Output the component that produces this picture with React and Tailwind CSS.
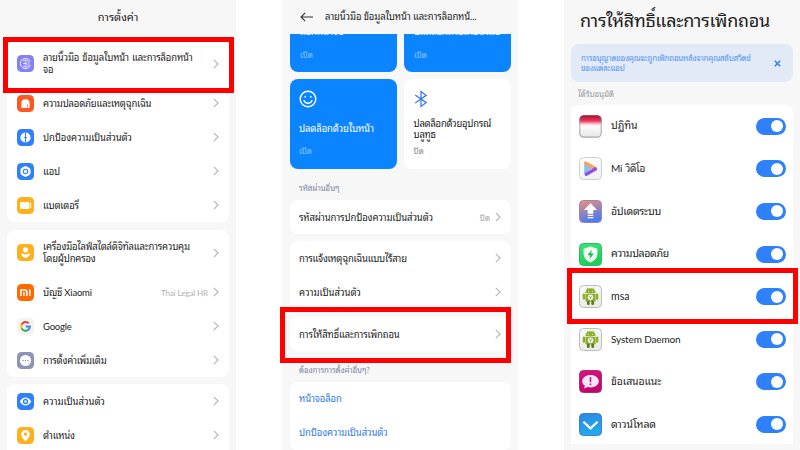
import React from "react";

const Chevron = ({ className = "" }) => (
  <svg viewBox="0 0 6 10" className={`w-[6px] h-[10px] shrink-0 ${className}`} fill="none" stroke="#b4b4b4" strokeWidth="1.1">
    <path d="M0.8 0.9 L5.1 5 L0.8 9.1" />
  </svg>
);

const Tile = ({ color, children }) => (
  <svg viewBox="0 0 17 17" className="w-[17px] h-[17px] shrink-0">
    <rect width="17" height="17" rx="4.6" fill={color} />
    {children}
  </svg>
);

const FingerprintIcon = () => (
  <Tile color="#8580f8">
    <g fill="none" stroke="#fff" strokeWidth="1" strokeLinecap="round" opacity="0.85">
      <path d="M13.2 6.2 A5.2 5.2 0 1 0 13.4 10.4" />
      <path d="M6.2 5.9 A3.4 3.4 0 0 1 11.9 8.5 A3.4 3.4 0 0 1 6.4 11.3" />
      <path d="M6.6 8.5 H8.6 M8.2 6.8 A1.8 1.8 0 0 1 8.2 10.3" />
    </g>
  </Tile>
);

const AlarmIcon = () => (
  <Tile color="#fd5722">
    <path d="M4.4 12.4 V8.4 A4.1 4.1 0 0 1 12.6 8.4 V12.4 A0.6 0.6 0 0 1 12 13 H5 A0.6 0.6 0 0 1 4.4 12.4Z" fill="#fff" />
    <path d="M10.5 9.2 V12.8" stroke="#fd5722" strokeWidth="0.6" />
  </Tile>
);

const PrivacyIcon = () => (
  <Tile color="#2f80fb">
    <circle cx="8.5" cy="8.5" r="5.1" fill="#fff" />
    <path d="M8.5 3.4 V13.6 M7.2 8.5 H10" stroke="#2f80fb" strokeWidth="1" />
  </Tile>
);

const AppsIcon = () => (
  <Tile color="#2f80fb">
    <path d="M7.3 3.4 Q8.5 2.8 9.7 3.4 L12.4 5 Q13.5 5.7 13.5 6.9 V10.1 Q13.5 11.3 12.4 12 L9.7 13.6 Q8.5 14.2 7.3 13.6 L4.6 12 Q3.5 11.3 3.5 10.1 V6.9 Q3.5 5.7 4.6 5Z" fill="#fff" />
    <circle cx="8.5" cy="8.5" r="2.2" fill="none" stroke="#2f80fb" strokeWidth="1.1" />
  </Tile>
);

const BatteryIcon = () => (
  <Tile color="#ffb01f">
    <rect x="3.1" y="5.1" width="9.3" height="6.9" rx="1.3" fill="#fff" />
    <path d="M13.7 6.4 V10.6" stroke="#fff" strokeWidth="0.9" strokeLinecap="round" />
  </Tile>
);

const FamilyIcon = () => (
  <Tile color="#ffb01f">
    <circle cx="8.5" cy="5.8" r="2.6" fill="#fff" />
    <path d="M4.2 10 Q4.6 9 5.8 9.4 Q8.5 11.4 11.2 9.4 Q12.4 9 12.8 10 Q12.4 12.2 10.5 13.2 Q8.5 14.2 6.5 13.2 Q4.6 12.2 4.2 10Z" fill="#fff" />
  </Tile>
);

const MiIcon = () => (
  <Tile color="#ff6a00">
    <path d="M3.9 11.9 V5.9 H7.8 Q9.9 5.9 9.9 7.9 V11.9 M6.9 8 V11.9 M12.8 5.2 V11.9" fill="none" stroke="#fff" strokeWidth="1.5" />
  </Tile>
);

const GoogleIcon = () => (
  <Tile color="#f4f4f4">
    <g fill="none" strokeWidth="2">
      <path d="M11.8 5.4 A4.4 4.4 0 0 0 4.6 6.6" stroke="#ea4335" />
      <path d="M4.6 6.5 A4.4 4.4 0 0 0 4.6 10.5" stroke="#fbbc05" />
      <path d="M4.6 10.4 A4.4 4.4 0 0 0 11.3 11.8" stroke="#34a853" />
      <path d="M11.2 11.9 A4.4 4.4 0 0 0 12.9 8.6 H8.6" stroke="#4285f4" />
    </g>
  </Tile>
);

const MoreIcon = () => (
  <Tile color="#8d95b5">
    <circle cx="8.5" cy="8.5" r="5.6" fill="#fff" />
    <g fill="#8d95b5">
      <circle cx="6" cy="8.5" r="0.75" />
      <circle cx="8.5" cy="8.5" r="0.75" />
      <circle cx="11" cy="8.5" r="0.75" />
    </g>
  </Tile>
);

const EyeIcon = () => (
  <Tile color="#2f80fb">
    <path d="M2.8 8.5 Q5.2 4.4 8.5 4.4 Q11.8 4.4 14.2 8.5 Q11.8 12.6 8.5 12.6 Q5.2 12.6 2.8 8.5Z" fill="#fff" />
    <circle cx="8.5" cy="8.5" r="2.7" fill="#2f80fb" />
    <circle cx="8.5" cy="8.5" r="1.2" fill="#fff" />
  </Tile>
);

const PinIcon = () => (
  <Tile color="#ffb01f">
    <path d="M8.5 14.3 C6.6 12.2 4.2 9.9 4.2 7.2 A4.3 4.3 0 0 1 12.8 7.2 C12.8 9.9 10.4 12.2 8.5 14.3Z" fill="#fff" />
    <circle cx="8.5" cy="7.2" r="1.6" fill="#ffb01f" />
  </Tile>
);

const AppTile = ({ id, from, to, children, border = "#cfcfcf" }) => (
  <svg viewBox="0 0 23 23" className="w-[23px] h-[23px] shrink-0">
    <defs>
      <linearGradient id={id} x1="0" y1="0" x2="0.3" y2="1">
        <stop offset="0" stopColor={from} />
        <stop offset="1" stopColor={to} />
      </linearGradient>
    </defs>
    <rect x="0.5" y="0.5" width="22" height="22" rx="4" fill={`url(#${id})`} stroke={border} strokeWidth="1" />
    {children}
  </svg>
);

const CalendarIcon = () => (
  <svg viewBox="0 0 23 23" className="w-[23px] h-[23px] shrink-0">
    <defs>
      <linearGradient id="cal" x1="0" y1="0" x2="0" y2="1">
        <stop offset="0" stopColor="#b80d2c" />
        <stop offset="0.24" stopColor="#ee3560" />
        <stop offset="0.4" stopColor="#f9d5dc" />
        <stop offset="0.5" stopColor="#fcfcfc" />
        <stop offset="1" stopColor="#e6e6e6" />
      </linearGradient>
      <linearGradient id="calEdge" x1="0" y1="0" x2="0" y2="1">
        <stop offset="0" stopColor="#8e2434" />
        <stop offset="0.4" stopColor="#c3b4b6" />
        <stop offset="1" stopColor="#a8a8a8" />
      </linearGradient>
    </defs>
    <rect x="0.8" y="0.8" width="21.4" height="21.4" rx="4" fill="url(#cal)" stroke="url(#calEdge)" strokeWidth="1.2" />
  </svg>
);

const VideoIcon = () => (
  <AppTile id="vid" from="#ffffff" to="#f1f1f3">
    <path d="M5.2 5 V17 L12.6 11.5Z" fill="#7fc4f5" />
    <path d="M6.8 6.2 L15.8 11.4" stroke="#f8a45b" strokeWidth="3.6" strokeLinecap="round" />
    <path d="M7.2 17.2 L16.4 12" stroke="#8f4fe8" strokeWidth="3.4" strokeLinecap="round" />
  </AppTile>
);

const UpdateIcon = () => (
  <AppTile id="upd" from="#f58f72" to="#4a7cf2" border="#9a86b4">
    <path d="M11.5 3.2 L18 10 H14.3 V13.8 H8.7 V10 H5Z" fill="#fff" />
    <path d="M8.7 15.4 H14.3 M8.7 17.6 H14.3" stroke="#fff" strokeWidth="1.1" />
  </AppTile>
);

const SecurityIcon = () => (
  <AppTile id="sec" from="#3ee577" to="#1fce5c" border="#2cb85c">
    <path d="M11.5 3.6 L18.4 5.8 V11 Q18.2 16.4 11.5 19.6 Q4.8 16.4 4.6 11 V5.8Z" fill="#f1fff5" />
    <path d="M12.8 6.8 L8.4 12.2 H11.2 L10.4 16.2 L14.8 10.6 H12Z" fill="#1fb850" />
  </AppTile>
);

const AndroidIcon = ({ id }) => (
  <AppTile id={id} from="#fbfbfb" to="#ebebeb" border="#bcbcbc">
    <g fill="#8cb023">
      <path d="M6.4 8 A5.1 4.8 0 0 1 16.6 8Z" />
      <path d="M6.4 8.7 H16.6 V15.6 Q16.6 16.6 15.6 16.6 H7.4 Q6.4 16.6 6.4 15.6Z" />
      <rect x="3.7" y="8.6" width="2.3" height="6.2" rx="1.1" />
      <rect x="17" y="8.6" width="2.3" height="6.2" rx="1.1" />
      <rect x="7.9" y="15.6" width="2.8" height="4.4" rx="1.2" fill="#5f7f16" />
      <rect x="12.3" y="15.6" width="2.8" height="4.4" rx="1.2" fill="#5f7f16" />
    </g>
    <path d="M8 2.7 L9.3 4.9 M15 2.7 L13.7 4.9" stroke="#8cb023" strokeWidth="0.7" />
    <circle cx="11.5" cy="12.3" r="3.4" fill="#f1f4e2" stroke="#6d8d1c" strokeWidth="0.7" />
    <path d="M10.1 11.4 L11.5 12.3 L12.9 11.4 M11.5 12.3 V14" stroke="#7b9a33" strokeWidth="0.7" fill="none" />
    <circle cx="9.6" cy="6.3" r="0.5" fill="#fff" />
    <circle cx="13.4" cy="6.3" r="0.5" fill="#fff" />
  </AppTile>
);

const FeedbackIcon = () => (
  <AppTile id="fb" from="#e0107f" to="#c4036c" border="#a8326f">
    <path d="M11.5 5 C16 5 19.8 7.6 19.8 11.2 C19.8 14.8 16 17.4 11.5 17.4 C10.6 17.4 9.6 17.3 8.8 17.1 L5.2 18.6 L5.9 15.8 C4.3 14.7 3.2 13 3.2 11.2 C3.2 7.6 7 5 11.5 5Z" fill="#f6e6fb" />
    <path d="M11.5 7.2 V12.2" stroke="#cf1480" strokeWidth="1.6" />
    <circle cx="11.5" cy="14.2" r="0.95" fill="#cf1480" />
  </AppTile>
);

const DownloadIcon = () => (
  <AppTile id="dl" from="#2d86e4" to="#22a9f0" border="#3a82c4">
    <path d="M4.4 8.8 L11.5 15.4 L18.6 8.8" fill="none" stroke="#fff" strokeWidth="2.2" />
  </AppTile>
);

const SettingRow = ({ icon, label, value, tall, track = "tracking-[-0.2px]" }) => (
  <div className={`flex items-center pl-[10px] pr-[10px] ${tall ? "h-[45px]" : "h-[34px]"}`}>
    {icon}
    <div className={`ml-[9px] flex-1 text-[9.5px] whitespace-pre ${tall ? "leading-[11.5px]" : "leading-[12px] pt-px"} ${track}`}>
      {label}
    </div>
    {value && <span className="text-[8px] text-[#b0b0b0] mr-[5px] pt-px tracking-[-0.1px]">{value}</span>}
    <Chevron />
  </div>
);

const SettingsScreen = () => (
  <div className="w-[236px] h-full bg-[#f7f7f7] px-[7px] overflow-hidden">
    <div className="h-[41px] pb-[6px] flex items-center justify-center text-[11px]">
      <span>การตั้งค่า</span>
    </div>
    <div className="bg-white rounded-[8px]">
      <SettingRow
        tall
        track="tracking-[-0.15px] [word-spacing:0.8px]"
        icon={<FingerprintIcon />}
        label={"ลายนิ้วมือ ข้อมูลใบหน้า และการล็อกหน้า\nจอ"}
      />
      <SettingRow icon={<AlarmIcon />} label="ความปลอดภัยและเหตุฉุกเฉิน" />
      <SettingRow icon={<PrivacyIcon />} label="ปกป้องความเป็นส่วนตัว" track="tracking-[-0.1px]" />
      <SettingRow icon={<AppsIcon />} label="แอป" />
      <SettingRow icon={<BatteryIcon />} label="แบตเตอรี่" />
    </div>
    <div className="bg-white rounded-[8px] mt-[8px]">
      <SettingRow tall icon={<FamilyIcon />} label={"เครื่องมือไลฟ์สไตล์ดิจิทัลและการควบคุม\nโดยผู้ปกครอง"} />
      <SettingRow icon={<MiIcon />} label="บัญชี Xiaomi" value="Thai Legal HR" />
      <SettingRow icon={<GoogleIcon />} label="Google" />
      <SettingRow icon={<MoreIcon />} label="การตั้งค่าเพิ่มเติม" />
    </div>
    <div className="bg-white rounded-t-[8px] mt-[7px]">
      <SettingRow icon={<EyeIcon />} label="ความเป็นส่วนตัว" track="tracking-normal" />
      <SettingRow icon={<PinIcon />} label="ตำแหน่ง" />
    </div>
  </div>
);

const LockRow = ({ label, value, link, track = "tracking-[-0.12px]" }) => (
  <div className={`h-[34px] flex items-center pl-[9px] pr-[10px] text-[9.5px] ${link ? "text-[#2f7de0]" : ""}`}>
    <span className={`flex-1 whitespace-nowrap ${link ? "" : "pt-[1.5px]"} ${track}`}>{label}</span>
    {value && <span className="text-[8px] text-[#a6a6a6] mr-[5px] pt-px">{value}</span>}
    {!link && <Chevron />}
  </div>
);

const LockScreen = () => (
  <div className="w-[236px] h-full bg-[#f7f7f7] pl-[8px] pr-[7px] overflow-hidden">
    <div className="h-[34px] flex items-center pl-[10px]">
      <svg viewBox="0 0 13 10" className="w-[13px] h-[10px] shrink-0" fill="none" stroke="#333" strokeWidth="1.1">
        <path d="M13 5 H1 M5.2 0.8 L1 5 L5.2 9.2" />
      </svg>
      <span className="ml-[12px] pt-px text-[9.5px] tracking-[-0.12px] whitespace-nowrap">ลายนิ้วมือ ข้อมูลใบหน้า และการล็อกหน้...</span>
    </div>
    <div className="grid grid-cols-2 gap-[7px] text-white">
      <div className="h-[38px] bg-[#0b84ff] rounded-b-[8px] px-[10px] overflow-hidden">
        <p className="text-[9.5px] leading-[12px] h-[12px] -mt-[8px] whitespace-nowrap">ล็อกหน้าจอ</p>
        <p className="text-[8px] leading-[12px] mt-[11px] text-[#8cc4ff]">เปิด</p>
      </div>
      <div className="h-[38px] bg-[#0b84ff] rounded-b-[8px] px-[10px] overflow-hidden">
        <p className="text-[9.5px] leading-[12px] h-[12px] -mt-[8px] tracking-[-0.12px] whitespace-nowrap">ปลดล็อกด้วยลายนิ้วมือ</p>
        <p className="text-[8px] leading-[12px] mt-[11px] text-[#8cc4ff]">เปิด</p>
      </div>
      <div className="h-[90px] bg-[#0b84ff] rounded-[8px] px-[9px] pt-[11px]">
        <svg viewBox="0 0 18 18" className="w-[18px] h-[18px]" fill="none" stroke="#fff" strokeWidth="1.4">
          <circle cx="9" cy="9" r="7.8" />
          <path d="M4.8 10.2 Q6 13.2 9 13.2 Q12 13.2 13.2 10.2" />
          <circle cx="6.2" cy="6.8" r="0.6" fill="#fff" strokeWidth="0.6" />
          <circle cx="11.8" cy="6.8" r="0.6" fill="#fff" strokeWidth="0.6" />
        </svg>
        <p className="text-[9.5px] leading-[12px] mt-[15px] tracking-[-0.12px] whitespace-nowrap">ปลดล็อกด้วยใบหน้า</p>
        <p className="text-[8px] leading-[12px] mt-[10px] text-[#8cc4ff]">เปิด</p>
      </div>
      <div className="h-[90px] bg-white rounded-[8px] px-[9.5px] pt-[11px] text-[#1c1c1c]">
        <svg viewBox="0 0 14 18" className="w-[14px] h-[18px]" fill="none" stroke="#3b7cf0" strokeWidth="1.3">
          <path d="M1.2 5 L12.2 12.6 L7 16.4 V1.6 L12.2 5.4 L1.2 13" />
        </svg>
        <p className="text-[9.5px] leading-[11px] mt-[10px] tracking-[-0.25px] whitespace-pre">{"ปลดล็อกด้วยอุปกรณ์\nบลูทูธ"}</p>
        <p className="text-[8px] leading-[12px] mt-[5px] text-[#8c8c8c]">ปิด</p>
      </div>
    </div>
    <p className="h-[31px] pt-[6px] flex items-center pl-[9px] text-[8px] tracking-[-0.1px] text-[#8388a5]">รหัสผ่านอื่นๆ</p>
    <div className="bg-white rounded-[8px]">
      <LockRow label="รหัสผ่านการปกป้องความเป็นส่วนตัว" value="ปิด" />
    </div>
    <div className="bg-white rounded-[8px] mt-[7px]">
      <LockRow label="การแจ้งเหตุฉุกเฉินแบบไร้สาย" track="tracking-[-0.24px]" />
      <LockRow label="ความเป็นส่วนตัว" track="tracking-normal" />
    </div>
    <div className="bg-white rounded-[8px] mt-[8px]">
      <LockRow label="การให้สิทธิ์และการเพิกถอน" />
    </div>
    <p className="h-[31px] pt-[6px] flex items-center pl-[9px] text-[8px] tracking-[-0.15px] text-[#8388a5]">ต้องการการตั้งค่าอื่นๆ?</p>
    <div className="bg-white rounded-[8px]">
      <LockRow link label="หน้าจอล็อก" />
      <LockRow link label="ปกป้องความเป็นส่วนตัว" />
    </div>
  </div>
);

const Toggle = () => (
  <div className="w-[30px] h-[17px] rounded-full bg-[#2f80fb] flex items-center justify-end pr-[3px]">
    <div className="size-[12px] rounded-full bg-white" />
  </div>
);

const apps = [
  { icon: <CalendarIcon />, label: "ปฏิทิน", track: "text-[10.5px] tracking-[-0.1px]" },
  { icon: <VideoIcon />, label: "Mi วิดีโอ", track: "text-[10px] tracking-[-0.25px] [word-spacing:1px]" },
  { icon: <UpdateIcon />, label: "อัปเดตระบบ", track: "text-[10.5px] tracking-[-0.3px]" },
  { icon: <SecurityIcon />, label: "ความปลอดภัย", track: "text-[10.5px] tracking-[-0.35px]" },
  { icon: <AndroidIcon id="msa" />, label: "msa", track: "text-[10.5px]" },
  { icon: <AndroidIcon id="daemon" />, label: "System Daemon", track: "text-[10px] tracking-[-0.15px]" },
  { icon: <FeedbackIcon />, label: "ข้อเสนอแนะ", track: "text-[10.5px] tracking-[-0.1px]" },
  { icon: <DownloadIcon />, label: "ดาวน์โหลด", track: "text-[10.5px] tracking-[-0.1px]" },
];

const PermissionScreen = () => (
  <div className="w-[236px] h-full bg-[#f7f7f7] px-[7px] overflow-hidden">
    <h1 className="h-[44px] pl-[9px] pb-[4px] flex items-center text-[18px] tracking-[-0.27px] whitespace-nowrap">
      การให้สิทธิ์และการเพิกถอน
    </h1>
    <div className="h-[38px] rounded-[8px] bg-[#e2eaf8] pl-[10px] pr-[12px] flex items-center justify-between text-[#5595f0]">
      <p className="text-[8px] leading-[10px] tracking-[-0.23px] whitespace-pre">
        {"การอนุญาตของคุณจะถูกเพิกถอนหลังจากคุณสลับสวิตช์\nของแต่ละแอป"}
      </p>
      <svg viewBox="0 0 7 7" className="size-[7px]" stroke="#2f7cf0" strokeWidth="1.4">
        <path d="M0.8 0.8 L6.2 6.2 M6.2 0.8 L0.8 6.2" />
      </svg>
    </div>
    <p className="h-[23px] flex items-center pl-[7px] text-[8px] tracking-[-0.1px] text-[#9a9a9a]">ได้รับอนุมัติ</p>
    <div className="bg-white rounded-t-[8px] h-[339px]">
      {apps.map((app) => (
        <div key={app.label} className="h-[42.6px] flex items-center pl-[8px] pr-[7px]">
          {app.icon}
          <span className={`ml-[9px] flex-1 ${app.track}`}>{app.label}</span>
          <Toggle />
        </div>
      ))}
    </div>
  </div>
);

const App = () => {
  return (
    <div className="relative w-[800px] h-[450px] bg-white overflow-hidden flex justify-between text-[#1c1c1c] font-['Lato','Noto_Sans_Thai_Looped','Loma','Laksaman','Garuda','Waree',sans-serif]">
      <SettingsScreen />
      <LockScreen />
      <PermissionScreen />
      <div className="absolute left-[3px] top-[37px] w-[231px] h-[56px] border-5 border-[#ff0000]" />
      <div className="absolute left-[280px] top-[307px] w-[231px] h-[56px] border-5 border-[#ff0000]" />
      <div className="absolute left-[567px] top-[268px] w-[231px] h-[56px] border-5 border-[#ff0000]" />
    </div>
  );
};

export default App;
